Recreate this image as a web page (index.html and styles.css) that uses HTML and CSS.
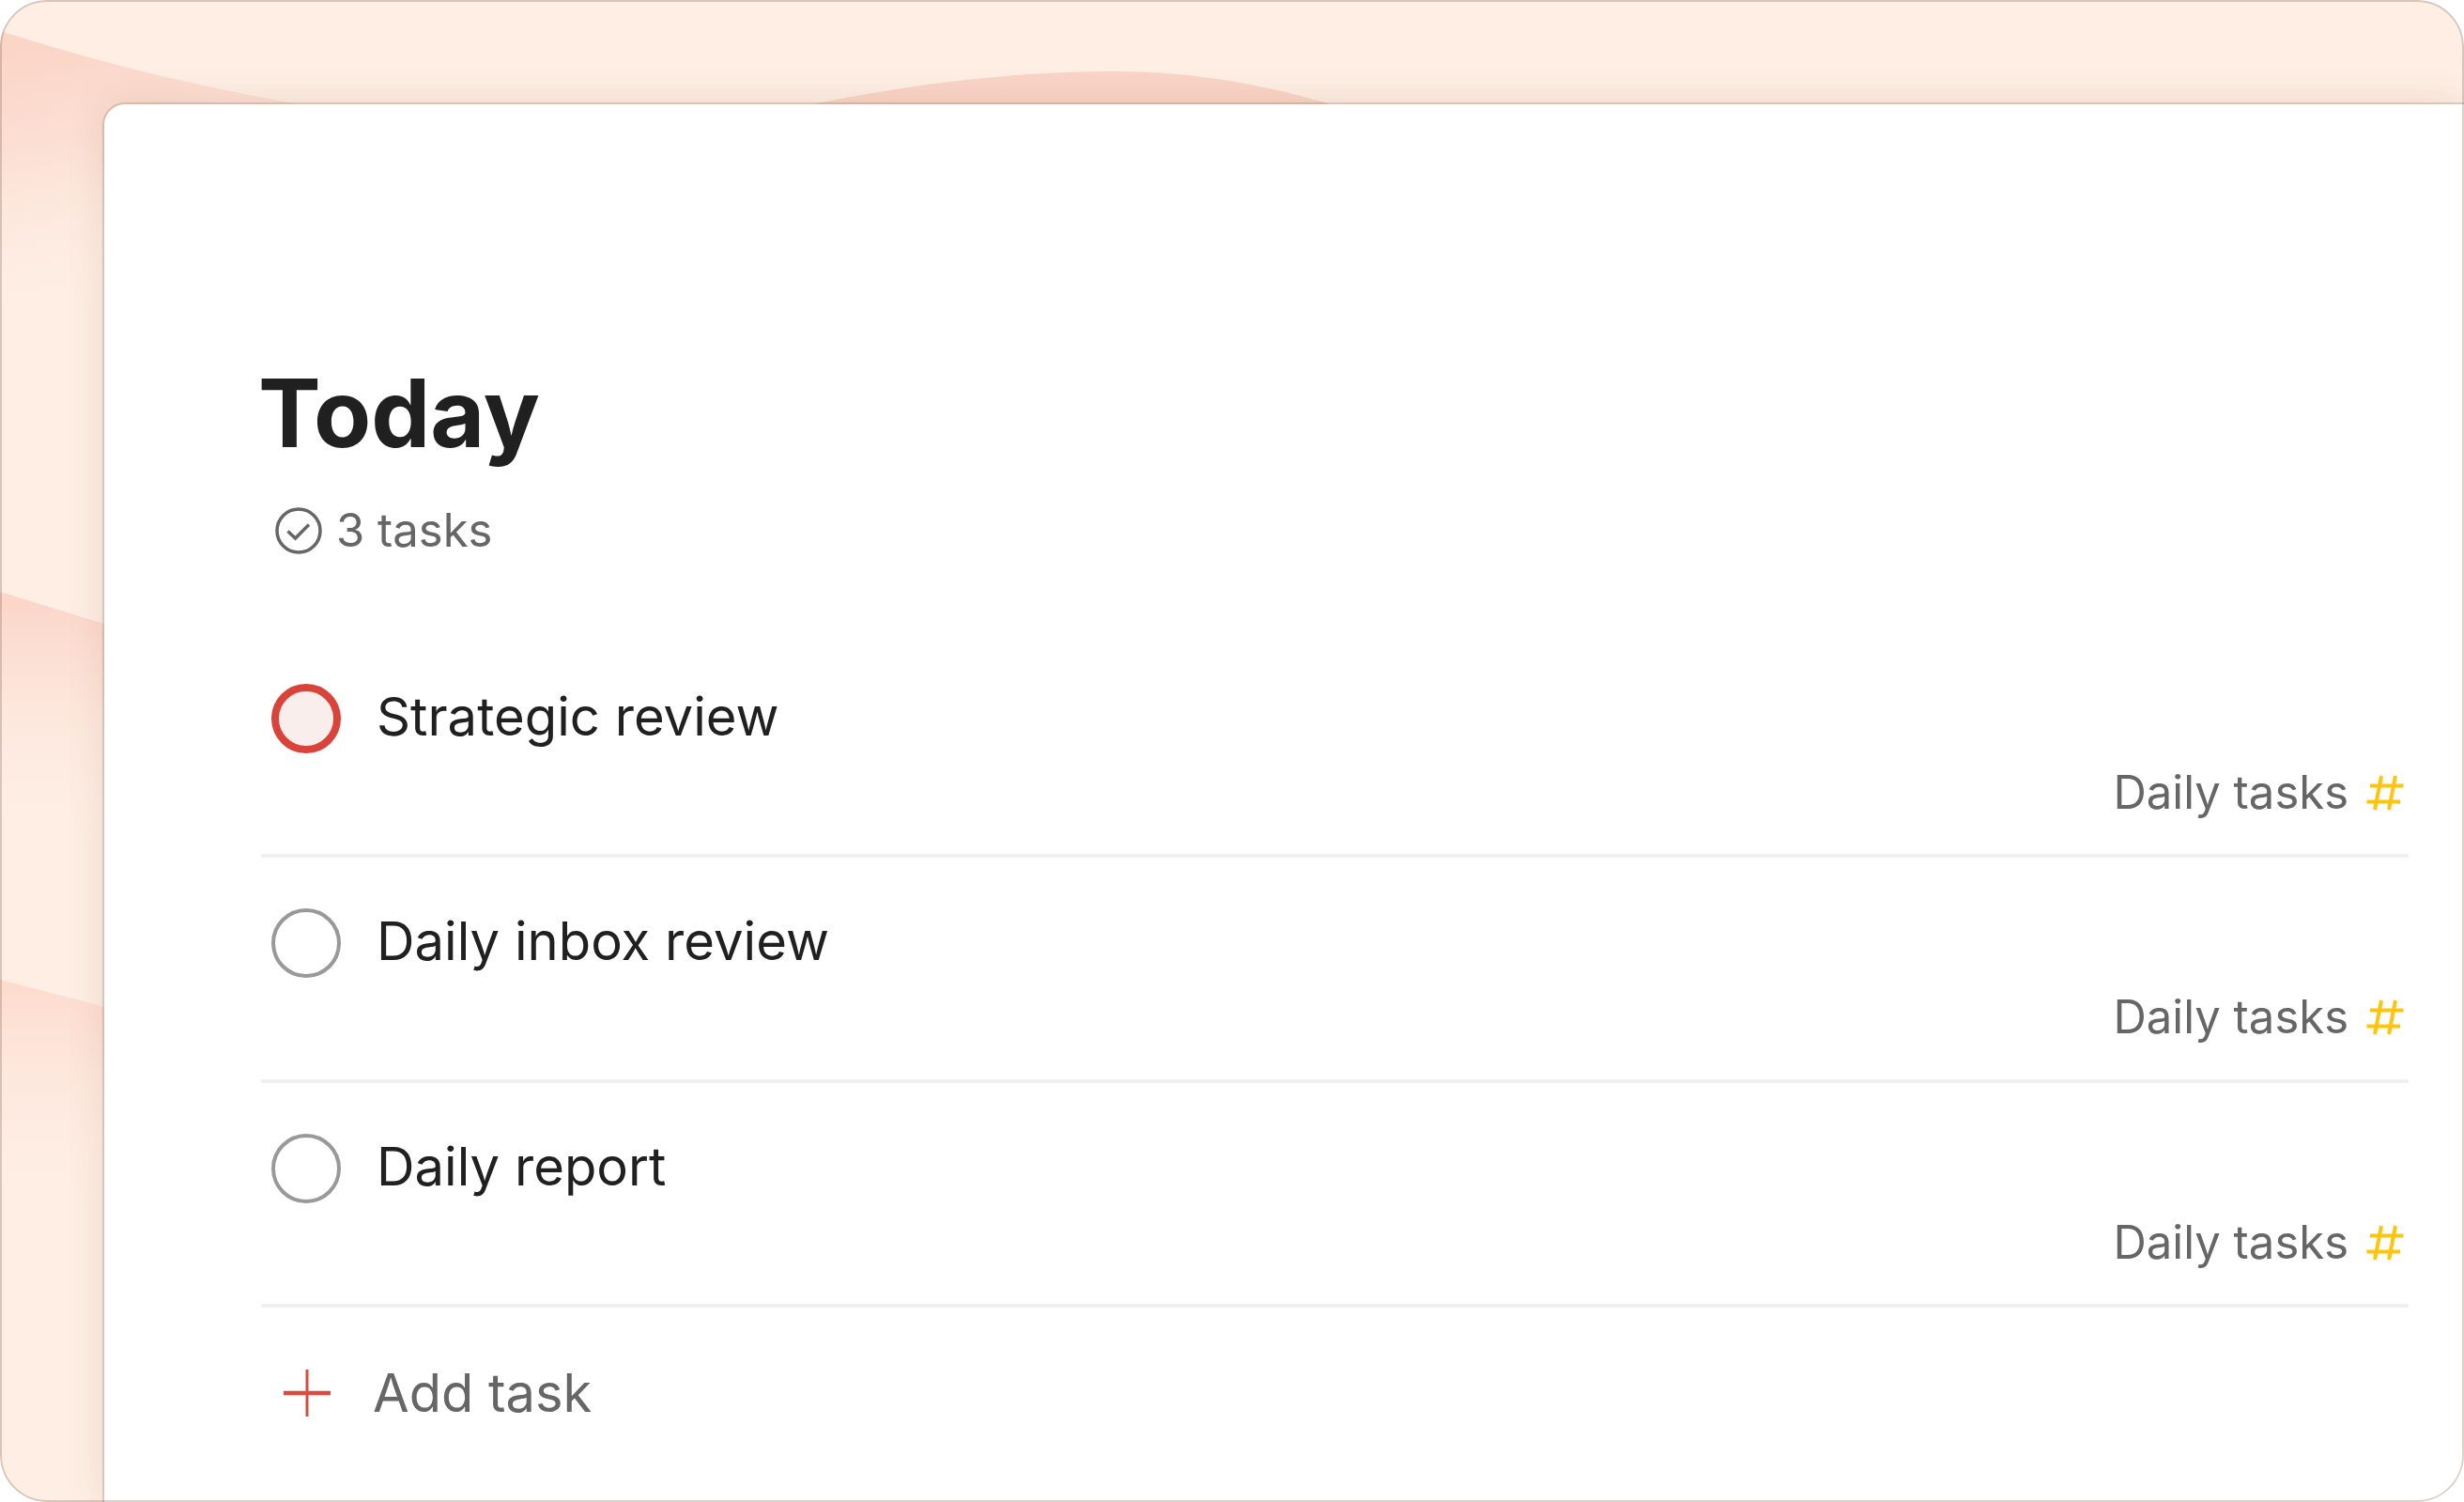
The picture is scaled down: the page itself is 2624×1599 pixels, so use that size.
FILE: index.html
```html
<!DOCTYPE html>
<html lang="en">
<head>
<meta charset="utf-8">
<title>Today</title>
<link rel="stylesheet" href="styles.css">
</head>
<body>
<div class="window">
  <svg class="backdrop" viewBox="0 0 2624 1599" aria-hidden="true">
    <defs>
      <linearGradient id="fadeA" gradientUnits="userSpaceOnUse" x1="0" y1="60" x2="60" y2="340">
        <stop offset="0" stop-color="#fbd5c8"/>
        <stop offset="0.35" stop-color="#fcdfd3"/>
        <stop offset="1" stop-color="#feeee4" stop-opacity="0"/>
      </linearGradient>
      <linearGradient id="fadeB" gradientUnits="userSpaceOnUse" x1="0" y1="640" x2="0" y2="900">
        <stop offset="0" stop-color="#fbd6c9"/>
        <stop offset="1" stop-color="#feeee4" stop-opacity="0"/>
      </linearGradient>
      <linearGradient id="fadeC" gradientUnits="userSpaceOnUse" x1="0" y1="1045" x2="0" y2="1290">
        <stop offset="0" stop-color="#fddbce"/>
        <stop offset="1" stop-color="#feeee4" stop-opacity="0"/>
      </linearGradient>
    </defs>
    <path class="wedge-a" d="M0 33C110 68 210 92 325 112L120 400L0 400Z"/>
    <path class="wedge-hump" d="M860 112C960 92 1070 76 1185 76C1270 76 1350 90 1420 112Z"/>
    <path class="wedge-b" d="M0 630L120 667V920H0Z"/>
    <path class="wedge-c" d="M0 1043L120 1074V1300H0Z"/>
  </svg>
  <main class="card">
    <h1 class="title">Today</h1>
    <div class="summary">
      <svg class="summary-icon" viewBox="0 0 50 50" aria-hidden="true">
        <circle cx="25" cy="25" r="23"/>
        <path d="M13.500 25.500L21.500 33L36 18.500"/>
      </svg>
      <span>3 tasks</span>
    </div>
    <ul class="tasks">
      <li class="task">
        <div class="task-main">
          <span class="check check-priority"></span>
          <span class="task-name">Strategic review</span>
        </div>
        <div class="task-meta">
          <span>Daily tasks</span>
          <svg class="hash" viewBox="0 0 40 38" aria-hidden="true"><path d="M0.5 28.500H36M4 11.500H39.500M16 1L9 37M31 1L24 37"/></svg>
        </div>
      </li>
      <li class="task">
        <div class="task-main">
          <span class="check"></span>
          <span class="task-name">Daily inbox review</span>
        </div>
        <div class="task-meta">
          <span>Daily tasks</span>
          <svg class="hash" viewBox="0 0 40 38" aria-hidden="true"><path d="M0.5 28.500H36M4 11.500H39.500M16 1L9 37M31 1L24 37"/></svg>
        </div>
      </li>
      <li class="task">
        <div class="task-main">
          <span class="check"></span>
          <span class="task-name">Daily report</span>
        </div>
        <div class="task-meta">
          <span>Daily tasks</span>
          <svg class="hash" viewBox="0 0 40 38" aria-hidden="true"><path d="M0.5 28.500H36M4 11.500H39.500M16 1L9 37M31 1L24 37"/></svg>
        </div>
      </li>
    </ul>
    <div class="add-task">
      <svg class="plus" viewBox="0 0 50 50" aria-hidden="true">
        <path class="plus-h" d="M0 25H50"/>
        <path class="plus-v" d="M25 0V50"/>
      </svg>
      <span>Add task</span>
    </div>
  </main>
</div>
</body>
</html>
```

FILE: styles.css
```css
* { box-sizing: border-box; }
html, body { margin: 0; padding: 0; background: #fff; }
body { font-family: Inter, "Liberation Sans", sans-serif; color: #202020; }

.window {
  position: relative;
  width: 2624px;
  height: 1599px;
  overflow: hidden;
  border-radius: 50px;
  background: #feeee4;
  padding: 111px 0 0 111px;
  display: flex;
}
.window::after {
  content: "";
  position: absolute;
  inset: 0;
  border-radius: 50px;
  border: 2px solid rgba(110, 80, 65, .26);
  pointer-events: none;
}
.backdrop { position: absolute; left: 0; top: 0; width: 2624px; height: 1599px; }
.wedge-a { fill: url(#fadeA); }
.wedge-hump { fill: #f9d5c7; }
.wedge-b { fill: url(#fadeB); }
.wedge-c { fill: url(#fadeC); }

.card {
  position: relative;
  flex: 1;
  background: #fff;
  border-top-left-radius: 22px;
  box-shadow: 0 0 0 2px rgba(120, 80, 60, .2), 0 0 40px rgba(125, 75, 45, .14);
  padding: 269px 59px 0 167px;
  display: flex;
  flex-direction: column;
}
.title {
  margin: 0 0 0 -3px;
  font-size: 100px;
  line-height: 120px;
  font-weight: 700;
  letter-spacing: 0;
  color: #202020;
}
.summary {
  display: flex;
  align-items: center;
  gap: 15px;
  margin: 36px 0 0 15px;
  font-size: 49px;
  line-height: 58px;
  color: #666;
}
.summary-icon { width: 50px; height: 50px; fill: none; stroke: #666; stroke-width: 3.500; }

.tasks { list-style: none; margin: 80px 0 0; padding: 0; }
.task { height: 239.300px; padding-top: 54px; border-bottom: 4px solid #f0f0f0; }
.task-main { display: flex; align-items: center; gap: 38px; padding-left: 11px; height: 74px; }
.check {
  width: 74px;
  height: 74px;
  border-radius: 50%;
  border: 4px solid #999;
  flex: none;
}
.check-priority { border: 8.500px solid #d9433a; background: #f9eeeb; }
.task-name { font-size: 56.200px; line-height: 71px; padding-bottom: 3px; color: #202020; }
.task-meta {
  display: flex;
  justify-content: flex-end;
  align-items: center;
  gap: 19px;
  margin-top: 13px;
  padding-right: 5px;
  font-size: 49px;
  line-height: 58px;
  color: #666;
}
.hash { width: 40px; height: 38px; fill: none; stroke: #fdc50f; stroke-width: 4; }

.add-task {
  display: flex;
  align-items: center;
  gap: 45px;
  margin-top: 54px;
  padding-left: 24px;
  height: 74px;
  font-size: 56px;
  color: #666;
}
.plus { width: 50px; height: 50px; fill: none; stroke: #dc4c3e; }
.plus-h { stroke-width: 4.500; }
.plus-v { stroke-width: 3; }
```
